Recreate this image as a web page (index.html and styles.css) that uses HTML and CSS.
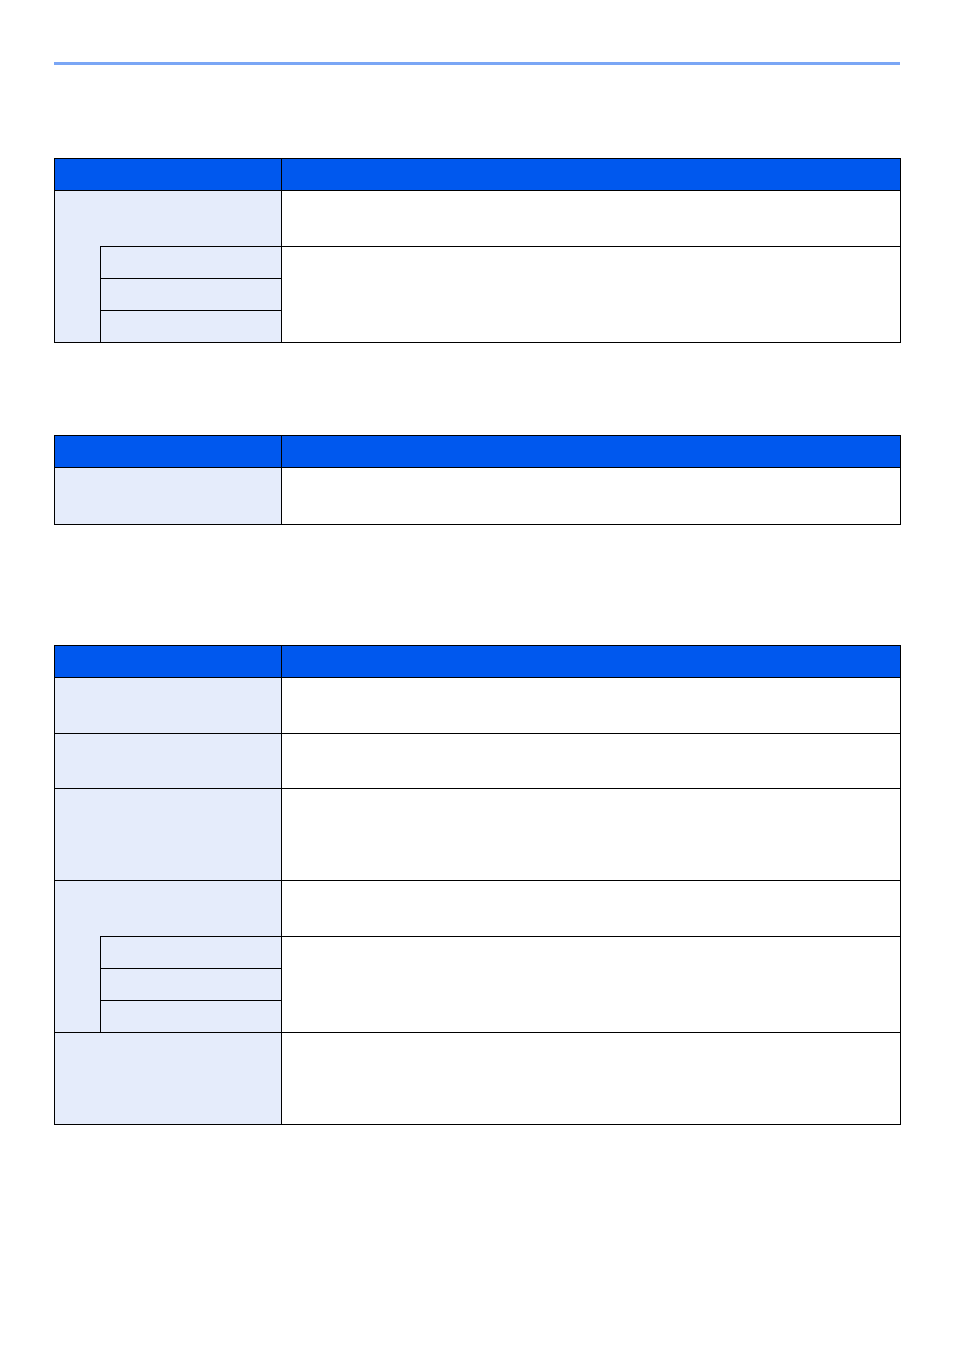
FILE: index.html
```html
<!DOCTYPE html>
<html lang="en">
<head>
<meta charset="utf-8">
<title>Tables</title>
<link rel="stylesheet" href="styles.css">
</head>
<body>
<div class="page">
  <div class="rule"></div>

  <div class="tbl t1">
    <div class="c hd span2"></div>
    <div class="c hd"></div>

    <div class="c lt span2 h56"></div>
    <div class="c h56"></div>

    <div class="c lt indent span3"></div>
    <div class="c lt sub h32"></div>
    <div class="c span3 desc-sub"></div>
    <div class="c lt sub h32"></div>
    <div class="c lt sub h32"></div>
  </div>

  <div class="tbl t2">
    <div class="c hd span2"></div>
    <div class="c hd"></div>

    <div class="c lt span2 h57"></div>
    <div class="c h57"></div>
  </div>

  <div class="tbl t3">
    <div class="c hd span2"></div>
    <div class="c hd"></div>

    <div class="c lt span2 h56"></div>
    <div class="c h56"></div>

    <div class="c lt span2 h55"></div>
    <div class="c h55"></div>

    <div class="c lt span2 h92"></div>
    <div class="c h92"></div>

    <div class="c lt span2 h56"></div>
    <div class="c h56"></div>

    <div class="c lt indent span3"></div>
    <div class="c lt sub h32"></div>
    <div class="c span3 desc-sub"></div>
    <div class="c lt sub h32"></div>
    <div class="c lt sub h32"></div>

    <div class="c lt span2 h92"></div>
    <div class="c h92"></div>
  </div>
</div>
</body>
</html>
```

FILE: styles.css
```css
html, body {
  margin: 0;
  padding: 0;
  background: #ffffff;
  font-family: "Liberation Sans", Arial, sans-serif;
}

.page {
  width: 954px;
  height: 1350px;
  padding-top: 62px;
  box-sizing: border-box;
}

.rule {
  margin-left: 54px;
  width: 846px;
  height: 3px;
  background: #7aa6f5;
}

.tbl {
  margin-left: 54px;
  width: 847px;
  display: grid;
  grid-template-columns: 46px 181px 619px;
  border-right: 1px solid #000;
  border-bottom: 1px solid #000;
  box-sizing: border-box;
}

.t1 { margin-top: 93px; }
.t2 { margin-top: 92px; }
.t3 { margin-top: 120px; }

.c {
  border-top: 1px solid #000;
  border-left: 1px solid #000;
  box-sizing: border-box;
  background: #ffffff;
}

.hd {
  background: #0058ee;
  height: 32px;
}

.lt { background: #e5ecfb; }

.span2 { grid-column: span 2; }

.indent {
  grid-row: span 3;
  border-top: none;
}

.desc-sub {
  grid-column: 3;
  grid-row: span 3;
}

.sub { grid-column: 2; }

.h32 { height: 32px; }
.h55 { height: 55px; }
.h56 { height: 56px; }
.h57 { height: 57px; }
.h92 { height: 92px; }
```
